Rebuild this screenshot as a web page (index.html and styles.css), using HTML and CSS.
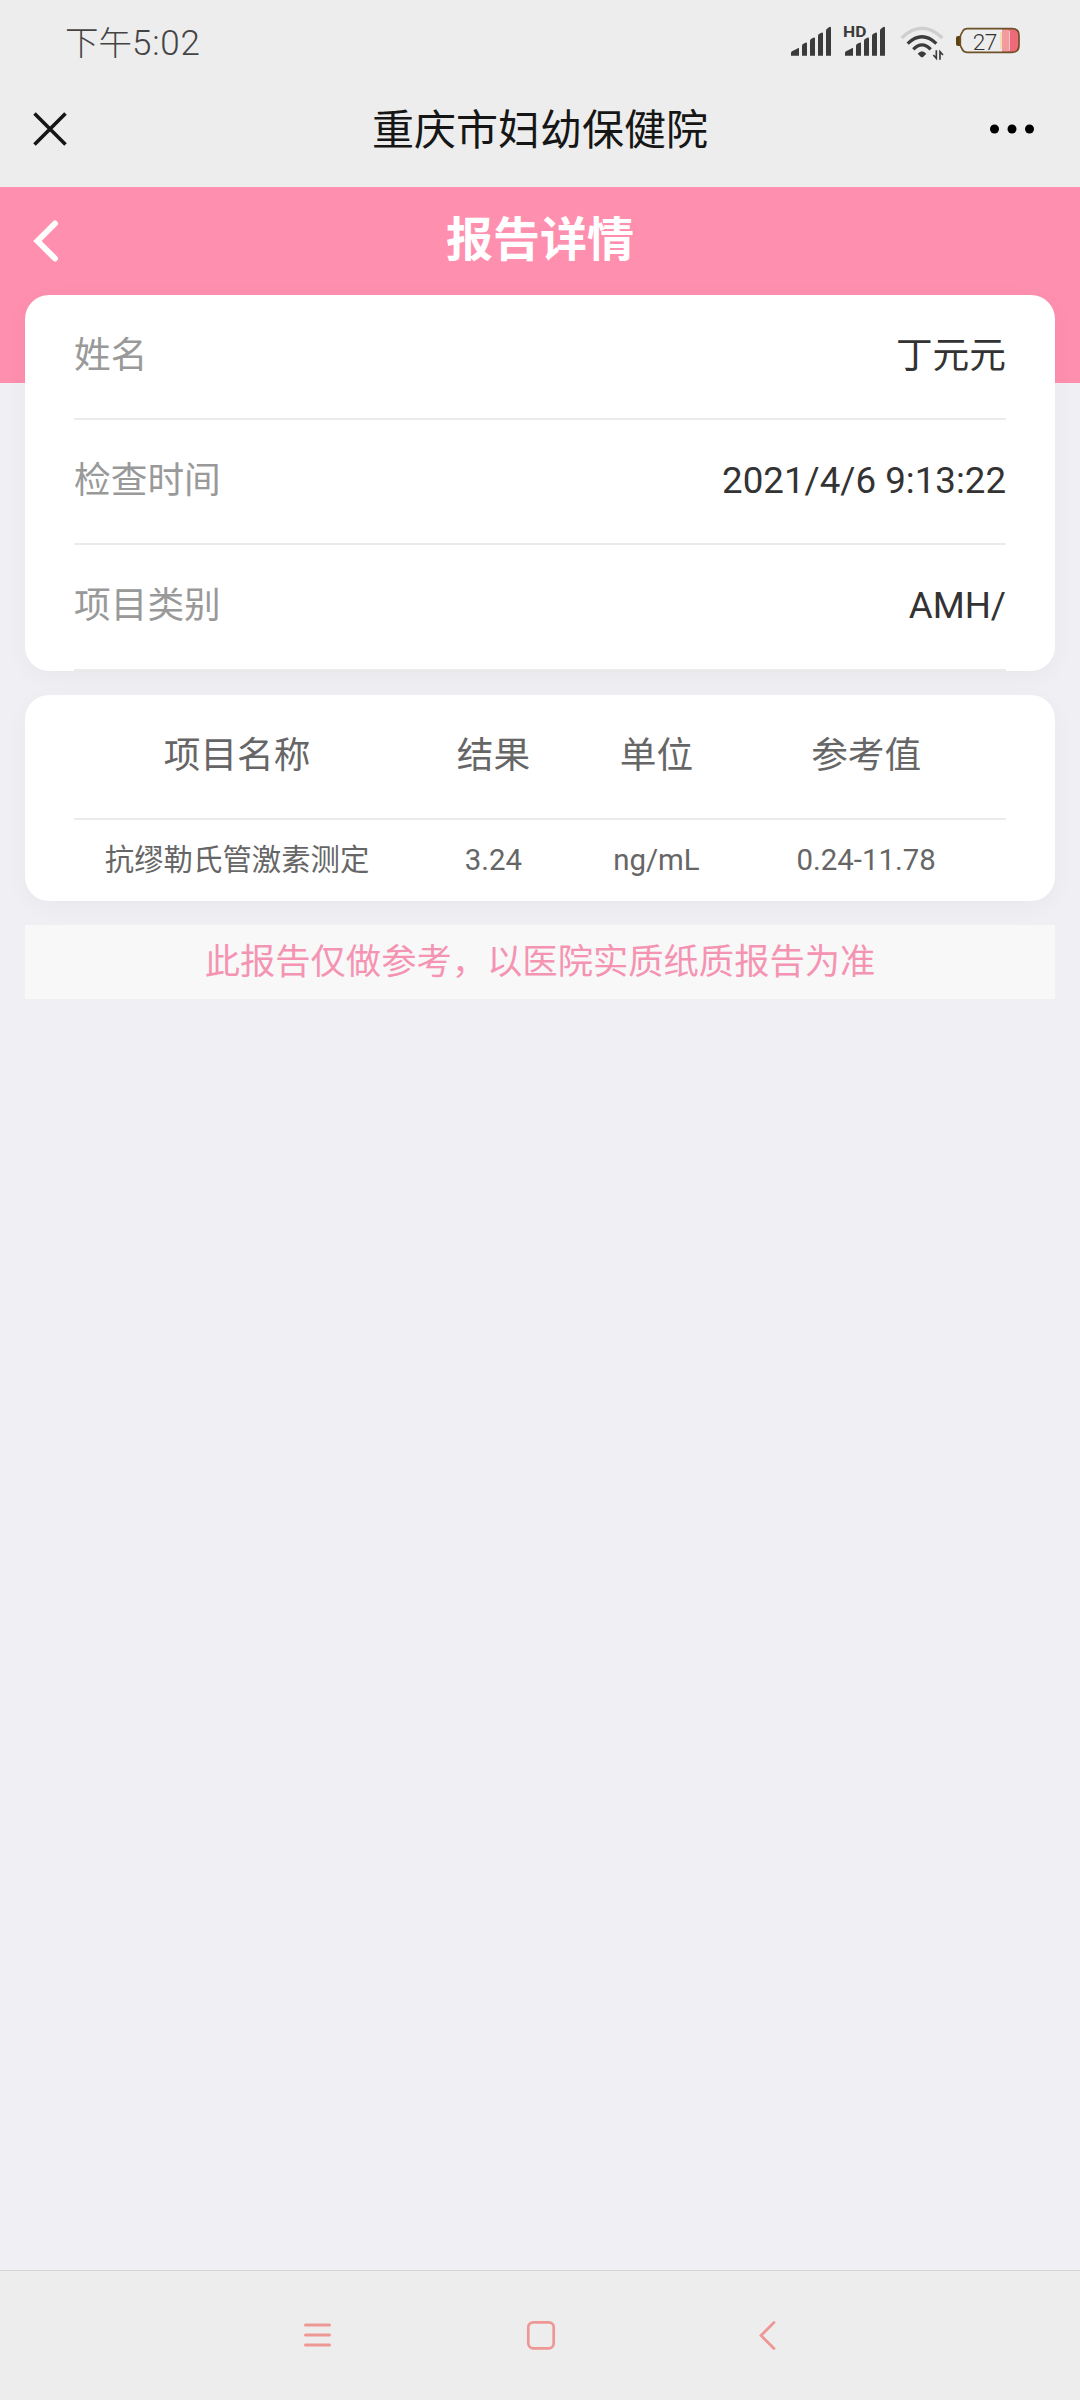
FILE: index.html
```html
<!DOCTYPE html>
<html lang="zh-CN">
<head>
<meta charset="utf-8">
<title>报告详情</title>
<link rel="stylesheet" href="styles.css">
</head>
<body>
<div class="screen">
  <header class="chrome">
    <div class="status">
      <span class="clock">下午<span class="digits">5:02</span></span>
      <svg class="status-icons" viewBox="0 0 780 210" width="260" height="70">
        <g fill="#3b3b3b">
          <path d="M33 137v-8q0-3 3-5l21-11v24zM66 137v-29q0-4 3-6l7-4q5-2 5 3v36zM90 137V93q0-4 3-6l7-4q5-2 5 3v51zM114 137V78q0-4 3-6l7-4q5-2 5 3v66zM138 137V62q0-4 3-6l7-5q5-2 5 3v83z"/>
          <path d="M195 137v-8q0-3 3-5l21-11v24zM228 137v-29q0-4 3-6l7-4q5-2 5 3v36zM252 137V93q0-4 3-6l7-4q5-2 5 3v51zM276 137V78q0-4 3-6l7-4q5-2 5 3v66zM300 137V62q0-4 3-6l7-5q5-2 5 3v83z"/>
          <text class="hd" x="189" y="81" textLength="70" lengthAdjust="spacingAndGlyphs">HD</text>
          <path d="M413 131q13-15 26 0l-9 9q-4 3-8 0z"/>
        </g>
        <path d="M469 121v24l-9-10M480 149v-24l9 10" fill="none" stroke="#3b3b3b" stroke-width="5"/>
        <g fill="none" stroke-width="10">
          <path d="M365 84Q426 26 487 84" stroke="#cfcfcf"/>
          <path d="M383 101Q426 60 469 101" stroke="#3b3b3b"/>
          <path d="M400 118Q426 91 452 118" stroke="#3b3b3b"/>
        </g>
        <path d="M543 78h-9q-6 0-6 6v18q0 6 6 6h9z" fill="#5c4312"/>
        <path d="M666 56h34q17 4 17 22v27q0 18-17 21h-34z" fill="#ee6a78"/>
        <path d="M666 58h20v67h-20z" fill="#f39a9e"/>
        <path d="M663 66v52" stroke="#f4cf7d" stroke-width="3"/>
        <path d="M688 62v60" stroke="#f7c3c5" stroke-width="4"/>
        <path d="M562 56h134q21 0 21 21v29q0 21-21 21H562q-10 0-14-7l-5-9q-2-4-2-8V81q0-4 2-8l5-9q4-8 14-8z" fill="none" stroke="#6e5128" stroke-width="5"/>
        <text class="charge" x="578" y="119" textLength="74">27</text>
      </svg>
    </div>
    <div class="titlebar">
      <svg class="close" viewBox="0 0 40 40" width="40" height="40"><path d="M4.500 4.500 35.500 35.500M35.500 4.500 4.500 35.500" fill="none" stroke="#161616" stroke-width="3.600"/></svg>
      <h1 class="site">重庆市妇幼保健院</h1>
      <svg class="more" viewBox="0 0 48 12" width="48" height="12"><circle cx="6.500" cy="6" r="4.500"/><circle cx="24" cy="6" r="4.500"/><circle cx="41.500" cy="6" r="4.500"/></svg>
    </div>
  </header>

  <main class="page">
    <div class="page-head">
      <svg class="back" viewBox="0 0 30 44" width="30" height="44"><path d="M24 4.500 6.500 22 24 39.500" fill="none" stroke="#fff" stroke-width="6" stroke-linecap="round"/></svg>
      <h2 class="page-title">报告详情</h2>
    </div>

    <section class="card">
      <div class="row"><span class="label">姓名</span><span>丁元元</span></div>
      <div class="row"><span class="label">检查时间</span><span>2021/4/6 9:13:22</span></div>
      <div class="row"><span class="label">项目类别</span><span>AMH/</span></div>
    </section>

    <section class="card results">
      <div class="cols cols-head"><span>项目名称</span><span>结果</span><span>单位</span><span>参考值</span></div>
      <div class="cols cols-body"><span>抗缪勒氏管激素测定</span><span>3.24</span><span>ng/mL</span><span>0.24-11.78</span></div>
    </section>

    <p class="notice">此报告仅做参考，以医院实质纸质报告为准</p>
  </main>

  <nav class="nav">
    <svg viewBox="0 0 32 32" width="32" height="32"><path d="M5.500 5h24M5.500 15h24M5.500 25h24" fill="none" stroke="#ee9896" stroke-width="3" stroke-linecap="round"/></svg>
    <svg viewBox="0 0 32 32" width="32" height="32"><rect x="3.300" y="2.300" width="25.400" height="26" rx="5" fill="none" stroke="#ee9896" stroke-width="2.700"/></svg>
    <svg viewBox="0 0 32 32" width="32" height="32"><path d="M24 2.500 11 15.500l13 13" fill="none" stroke="#ee9896" stroke-width="2.800" stroke-linecap="round"/></svg>
  </nav>
</div>
</body>
</html>
```
FILE: styles.css
```css
* { box-sizing: border-box; }

body {
  margin: 0;
  font-family: Roboto, "Noto Sans CJK SC", sans-serif;
  color: #333;
}

svg { display: block; flex: none; }

.screen {
  width: 1080px;
  height: 2400px;
  display: flex;
  flex-direction: column;
  background: #efeff4;
}

.chrome { height: 187px; background: #ededed; }

.status {
  height: 80px;
  display: flex;
  justify-content: space-between;
  padding: 10px 40px 0 65px;
}

.clock {
  font-size: 33.5px;
  font-weight: 300;
  line-height: 67px;
  color: #444;
}

.digits {
  font-size: 35px;
  letter-spacing: 0.8px;
}

.hd { font: bold 46px Roboto, sans-serif; }
.charge { font: 300 68px Roboto, sans-serif; fill: #333; }

.titlebar {
  height: 98px;
  display: flex;
  align-items: center;
  justify-content: space-between;
  padding: 0 44px 0 30px;
}

.site {
  margin: 0;
  padding: 3px 0 0 22px;
  font-size: 42px;
  font-weight: 400;
  line-height: 98px;
  color: #161616;
}

.page {
  flex: 1;
  padding: 0 25px;
  display: flex;
  flex-direction: column;
  gap: 24px;
  background: linear-gradient(#ff8fae 196px, #efeff4 196px);
}

.page-head {
  height: 108px;
  margin-bottom: -24px;
  display: grid;
  grid-template-columns: 30px 1fr 30px;
  align-items: center;
  padding: 0 6px;
}

.page-title {
  margin: 0;
  text-align: center;
  font-size: 47px;
  font-weight: 700;
  line-height: 104px;
  padding-bottom: 3px;
  color: #fff;
}

.card {
  flex: none;
  padding: 0 49px;
  border-radius: 24px;
  background: #fff;
  box-shadow: 0 6px 24px rgba(0, 0, 0, 0.035);
  font-size: 36.7px;
}

.row {
  height: 125px;
  display: flex;
  justify-content: space-between;
  border-bottom: 2px solid #ebebeb;
  line-height: 121px;
}

.row:last-child { height: 126px; }

.label { color: #999; }

.cols {
  display: grid;
  grid-template-columns: 35% 20% 15% 30%;
  text-align: center;
  color: #666;
}

.cols-head { height: 125px; border-bottom: 2px solid #ebebeb; line-height: 121px; }
.cols-body { height: 81px; font-size: 29.4px; line-height: 81px; }

.notice {
  margin: 0;
  height: 74px;
  background: #f8f8f8;
  text-align: center;
  font-size: 35.3px;
  line-height: 75px;
  color: #f594b2;
}

.nav {
  height: 130px;
  display: flex;
  justify-content: center;
  align-items: center;
  gap: 193px;
  padding-left: 2px;
  border-top: 1px solid #d5d5d5;
  background: #ededed;
}
```
